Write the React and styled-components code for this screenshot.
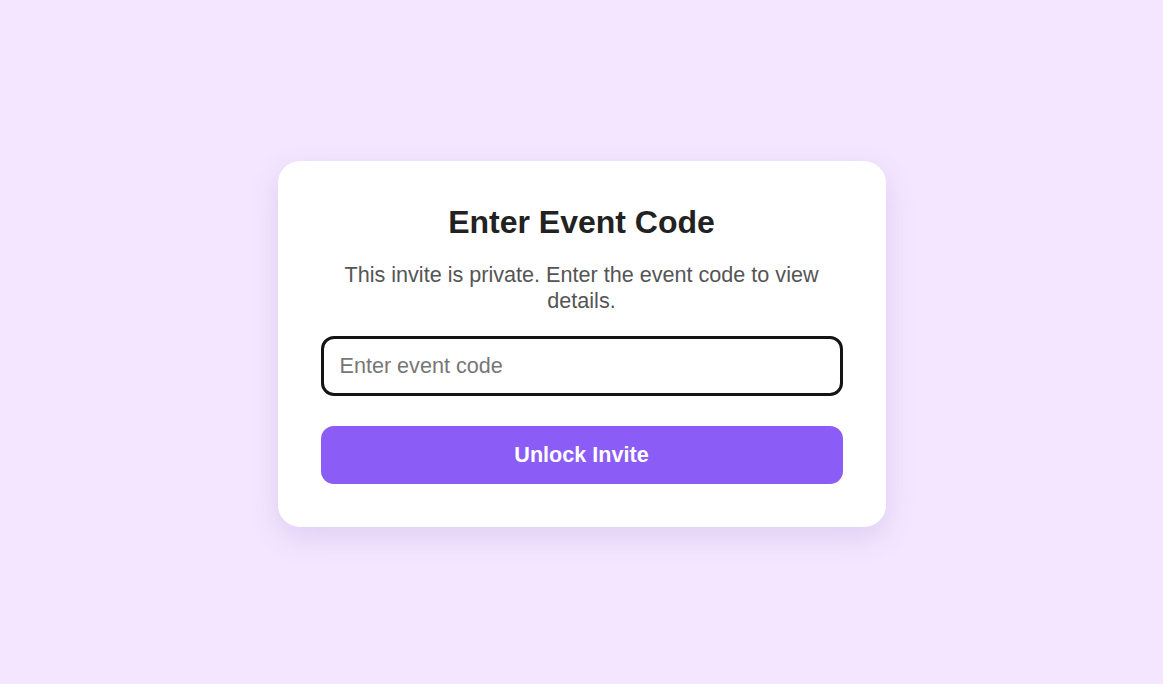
import React, { useState } from "react";
import styled, { createGlobalStyle } from "styled-components";

const Global = createGlobalStyle`
  * { box-sizing: border-box; }
  html, body { margin: 0; padding: 0; }
  body {
    background: #f4e6ff;
    font-family: "Liberation Sans", Arial, sans-serif;
  }
`;

const Page = styled.main`
  min-height: 100vh;
  display: flex;
  align-items: center;
  justify-content: center;
  padding-top: 4px;
`;

const Card = styled.section`
  width: 608px;
  background: #ffffff;
  border-radius: 22px;
  padding: 43px;
  box-shadow: 0 10px 30px rgba(120, 80, 180, 0.16);
  display: flex;
  flex-direction: column;
  text-align: center;
`;

const Title = styled.h1`
  margin: 0 0 21px;
  font-size: 32px;
  font-weight: 700;
  color: #222222;
  line-height: normal;
`;

const Subtitle = styled.p`
  margin: 0 0 22px;
  font-size: 21.6px;
  color: #555555;
  line-height: normal;
`;

const CodeInput = styled.input`
  width: 100%;
  height: 60px;
  border: 3px solid #141414;
  border-radius: 13px;
  padding: 0 16px;
  font-family: inherit;
  font-size: 21.6px;
  color: #222;
  outline: none;
  background: #fff;
  &::placeholder { color: #777777; }
`;

const Button = styled.button`
  margin-top: 30px;
  width: 100%;
  height: 58px;
  border: none;
  border-radius: 13px;
  background: #8b5cf6;
  color: #ffffff;
  font-family: inherit;
  font-size: 21.6px;
  font-weight: 700;
  cursor: pointer;
`;

export default function App() {
  const [code, setCode] = useState("");
  return (
    <>
      <Global />
      <Page>
        <Card>
          <Title>Enter Event Code</Title>
          <Subtitle>This invite is private. Enter the event code to view details.</Subtitle>
          <CodeInput
            autoFocus
            placeholder="Enter event code"
            value={code}
            onChange={(e) => setCode(e.target.value)}
          />
          <Button type="button">Unlock Invite</Button>
        </Card>
      </Page>
    </>
  );
}
